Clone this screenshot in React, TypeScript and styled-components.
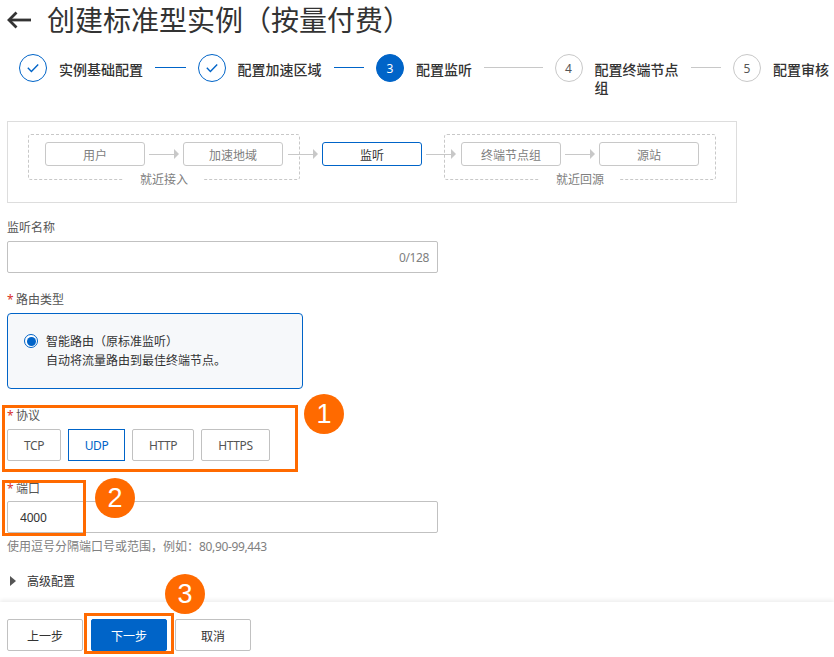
import React from "react";
import styled, { createGlobalStyle } from "styled-components";

const FONT = `"Noto Sans", "Noto Sans CJK SC", sans-serif`;
const BLUE = "#0064c8";
const ORANGE = "#ff6a00";

const Global = createGlobalStyle`
  html, body { margin: 0; padding: 0; background: #fff; overflow: hidden; }
  body { font-family: ${FONT}; color: #333; font-size: 12px; }
  * { box-sizing: border-box; }
`;

const Page = styled.div`
  position: relative;
  width: 834px;
  height: 657px;
  overflow: hidden;
`;

const Header = styled.header`
  display: flex;
  align-items: center;
  height: 38px;
  padding: 2px 0 0 7px;
  gap: 16px;
`;

const Title = styled.h1`
  margin: 0;
  font-size: 28px;
  font-weight: 400;
  line-height: 36px;
  color: #333;
  white-space: nowrap;
`;

const Steps = styled.div`
  display: grid;
  grid-template-columns: repeat(4, 178.5px) 1fr;
  margin-top: 16px;
  padding-left: 19px;
  height: 67px;
`;

const Step = styled.div`
  display: flex;
  align-items: flex-start;
`;

const StepCircle = styled.div<{ $state: "done" | "active" | "todo" }>`
  flex: none;
  width: 28px;
  height: 28px;
  border-radius: 50%;
  display: flex;
  align-items: center;
  justify-content: center;
  font-size: 12px;
  color: ${(p) => (p.$state === "active" ? "#fff" : "#555")};
  background: ${(p) => (p.$state === "active" ? BLUE : "#fff")};
  border: 1px solid ${(p) => (p.$state === "todo" ? "#c8c8c8" : BLUE)};
`;

const StepText = styled.div`
  flex: none;
  max-width: 84px;
  margin-left: 12px;
  padding-top: 7px;
  font-size: 14px;
  line-height: 18px;
  font-weight: 500;
  color: #333;
`;

const StepLine = styled.div<{ $done: boolean }>`
  flex: 1;
  height: 1px;
  margin: 13px 12px 0;
  background: ${(p) => (p.$done ? BLUE : "#c8c8c8")};
`;

const Diagram = styled.div`
  display: flex;
  width: 730px;
  height: 82px;
  margin-left: 7px;
  padding: 12px 20px 0;
  border: 1px solid #ddd;
`;

const Group = styled.div`
  position: relative;
  display: flex;
  align-items: flex-start;
  flex: none;
  width: 272px;
  height: 46px;
  padding: 7px 16px 0;
  border: 1px dashed #c8c8c8;
  border-radius: 3px;
`;

const GroupLabel = styled.span`
  position: absolute;
  left: 50%;
  bottom: -10px;
  transform: translateX(-50%);
  padding: 0 16px;
  background: #fff;
  line-height: 18px;
  font-size: 12px;
  color: #808080;
  white-space: nowrap;
`;

const Node = styled.div<{ $active?: boolean }>`
  flex: none;
  width: 100px;
  height: 24px;
  padding-top: 1px;
  display: flex;
  align-items: center;
  justify-content: center;
  border: 1px solid ${(p) => (p.$active ? BLUE : "#c8c8c8")};
  border-radius: 3px;
  font-size: 12px;
  color: ${(p) => (p.$active ? "#333" : "#808080")};
  background: #fff;
`;

const Arrow = styled.div<{ $ml?: number; $mr?: number }>`
  flex: none;
  display: flex;
  align-items: center;
  width: 30px;
  height: 24px;
  margin: 0 ${(p) => p.$mr ?? 4}px 0 ${(p) => p.$ml ?? 4}px;
  &::before {
    content: "";
    flex: 1;
    height: 1px;
    background: #c8c8c8;
  }
  &::after {
    content: "";
    border-left: 5px solid #c8c8c8;
    border-top: 5px solid transparent;
    border-bottom: 5px solid transparent;
  }
`;

const Centre = styled.div`
  display: flex;
  flex: none;
  padding-top: 8px;
`;

const Form = styled.div`
  padding-left: 7px;
`;

const Label = styled.div<{ $mt: number; $mb?: number }>`
  height: 18px;
  margin-top: ${(p) => p.$mt}px;
  margin-bottom: ${(p) => p.$mb ?? 5}px;
  font-size: 12px;
  line-height: 20px;
  color: #555;
`;

const Star = styled.span`
  display: inline-block;
  width: 9px;
  color: #d93026;
`;

const InputBox = styled.div`
  display: flex;
  align-items: center;
  width: 431px;
  height: 32px;
  padding: 0 8px 0 12px;
  border: 1px solid #c1c1c1;
  border-radius: 2px;
  background: #fff;
`;

const TextInput = styled.input`
  flex: 1;
  min-width: 0;
  border: 0;
  outline: 0;
  padding: 0;
  background: transparent;
  font: 12px ${FONT};
  letter-spacing: -0.2px;
  color: #333;
`;

const Counter = styled.span`
  font-size: 12px;
  letter-spacing: -0.4px;
  color: #808080;
`;

const RadioCard = styled.div`
  display: flex;
  align-items: flex-start;
  width: 296px;
  height: 76px;
  padding: 18px 16px 0;
  background: #f6f8fa;
  border: 1px solid ${BLUE};
  border-radius: 4px;
`;

const RadioDot = styled.span`
  flex: none;
  width: 14px;
  height: 14px;
  margin-top: 2px;
  margin-right: 8px;
  border-radius: 50%;
  border: 1px solid ${BLUE};
  background: #fff;
  display: flex;
  align-items: center;
  justify-content: center;
  &::after {
    content: "";
    width: 9px;
    height: 9px;
    border-radius: 50%;
    background: ${BLUE};
  }
`;

const RadioText = styled.div`
  font-size: 12px;
  line-height: 19px;
  color: #333;
`;

const Tabs = styled.div`
  display: flex;
  gap: 7px;
`;

const Tab = styled.div<{ $w: number; $active?: boolean }>`
  width: ${(p) => p.$w}px;
  height: 32px;
  display: flex;
  align-items: center;
  justify-content: center;
  font-size: 12px;
  letter-spacing: -0.4px;
  color: ${(p) => (p.$active ? BLUE : "#555")};
  border: 1px solid ${(p) => (p.$active ? BLUE : "#c1c1c1")};
  border-radius: ${(p) => (p.$active ? 0 : 2)}px;
`;

const Hint = styled.div`
  margin-top: 4px;
  height: 18px;
  font-size: 12px;
  line-height: 20px;
  color: #808080;
`;

const HintNumbers = styled.span`
  letter-spacing: -0.35px;
`;

const Advanced = styled.div`
  display: flex;
  align-items: center;
  gap: 11px;
  height: 18px;
  margin-top: 17px;
  padding-left: 3px;
  font-size: 12px;
  color: #333;
  &::before {
    content: "";
    border-left: 6px solid #555;
    border-top: 5px solid transparent;
    border-bottom: 5px solid transparent;
  }
`;

const Footer = styled.footer`
  display: flex;
  gap: 8px;
  margin-top: 12px;
  padding: 17px 7px 0;
  height: 55px;
  background: #fff;
  box-shadow: 0 -2px 4px rgba(0, 0, 0, 0.07);
`;

const Button = styled.div<{ $primary?: boolean }>`
  width: 76px;
  height: 32px;
  padding-top: 1px;
  display: flex;
  align-items: center;
  justify-content: center;
  font-size: 12px;
  border-radius: 2px;
  color: ${(p) => (p.$primary ? "#fff" : "#333")};
  background: ${(p) => (p.$primary ? BLUE : "#fff")};
  border: 1px solid ${(p) => (p.$primary ? BLUE : "#c1c1c1")};
`;

const Mark = styled.div<{ $x: number; $y: number; $w: number; $h: number }>`
  position: absolute;
  left: ${(p) => p.$x}px;
  top: ${(p) => p.$y}px;
  width: ${(p) => p.$w}px;
  height: ${(p) => p.$h}px;
  border: 3px solid ${ORANGE};
`;

const Badge = styled.div<{ $cx: number; $cy: number }>`
  position: absolute;
  left: ${(p) => p.$cx - 20}px;
  top: ${(p) => p.$cy - 20}px;
  width: 40px;
  height: 40px;
  border-radius: 50%;
  background: ${ORANGE};
  color: #fff;
  display: flex;
  align-items: center;
  justify-content: center;
  font: 27px "Liberation Sans", sans-serif;
`;

const BackIcon = () => (
  <svg width="24" height="18" viewBox="0 0 24 18" fill="none" stroke="#333" strokeWidth="2.8">
    <path d="M24 9H2" />
    <path d="M9.5 1.5 2 9l7.5 7.5" />
  </svg>
);

const CheckIcon = () => (
  <svg width="12" height="10" viewBox="0 0 12 10" fill="none" stroke={BLUE} strokeWidth="1.4">
    <path d="M.8 4.8 4.4 8.4 11.2 1.4" />
  </svg>
);

const stepData: { text: string; state: "done" | "active" | "todo"; n?: number }[] = [
  { text: "实例基础配置", state: "done" },
  { text: "配置加速区域", state: "done" },
  { text: "配置监听", state: "active", n: 3 },
  { text: "配置终端节点组", state: "todo", n: 4 },
  { text: "配置审核", state: "todo", n: 5 },
];

export default function App() {
  return (
    <Page>
      <Global />
      <Header>
        <BackIcon />
        <Title>创建标准型实例（按量付费）</Title>
      </Header>

      <Steps>
        {stepData.map((s, i) => (
          <Step key={s.text}>
            <StepCircle $state={s.state}>{s.state === "done" ? <CheckIcon /> : s.n}</StepCircle>
            <StepText>{s.text}</StepText>
            {i < stepData.length - 1 && <StepLine $done={s.state === "done"} />}
          </Step>
        ))}
      </Steps>

      <Diagram>
        <Group>
          <Node>用户</Node>
          <Arrow />
          <Node>加速地域</Node>
          <GroupLabel>就近接入</GroupLabel>
        </Group>
        <Centre>
          <Arrow $ml={-12} />
          <Node $active>监听</Node>
          <Arrow $mr={-12} />
        </Centre>
        <Group>
          <Node>终端节点组</Node>
          <Arrow />
          <Node>源站</Node>
          <GroupLabel>就近回源</GroupLabel>
        </Group>
      </Diagram>

      <Form>
        <Label $mt={15}>监听名称</Label>
        <InputBox>
          <TextInput readOnly value="" />
          <Counter>0/128</Counter>
        </InputBox>

        <Label $mt={17}>
          <Star>*</Star>路由类型
        </Label>
        <RadioCard>
          <RadioDot />
          <RadioText>
            智能路由（原标准监听）
            <br />
            自动将流量路由到最佳终端节点。
          </RadioText>
        </RadioCard>

        <Label $mt={17}>
          <Star>*</Star>协议
        </Label>
        <Tabs>
          <Tab $w={54}>TCP</Tab>
          <Tab $w={57} $active>UDP</Tab>
          <Tab $w={62}>HTTP</Tab>
          <Tab $w={69}>HTTPS</Tab>
        </Tabs>

        <Label $mt={18} $mb={4}>
          <Star>*</Star>端口
        </Label>
        <InputBox>
          <TextInput readOnly value="4000" />
        </InputBox>
        <Hint>
          使用逗号分隔端口号或范围，例如：<HintNumbers>80,90-99,443</HintNumbers>
        </Hint>
        <Advanced>高级配置</Advanced>
      </Form>

      <Footer>
        <Button>上一步</Button>
        <Button $primary>下一步</Button>
        <Button>取消</Button>
      </Footer>

      <Mark $x={2} $y={405} $w={296} $h={67} />
      <Badge $cx={324} $cy={414}>1</Badge>
      <Mark $x={2} $y={480} $w={84} $h={56} />
      <Badge $cx={115} $cy={498}>2</Badge>
      <Mark $x={84} $y={613} $w={90} $h={41} />
      <Badge $cx={185} $cy={594}>3</Badge>
    </Page>
  );
}
